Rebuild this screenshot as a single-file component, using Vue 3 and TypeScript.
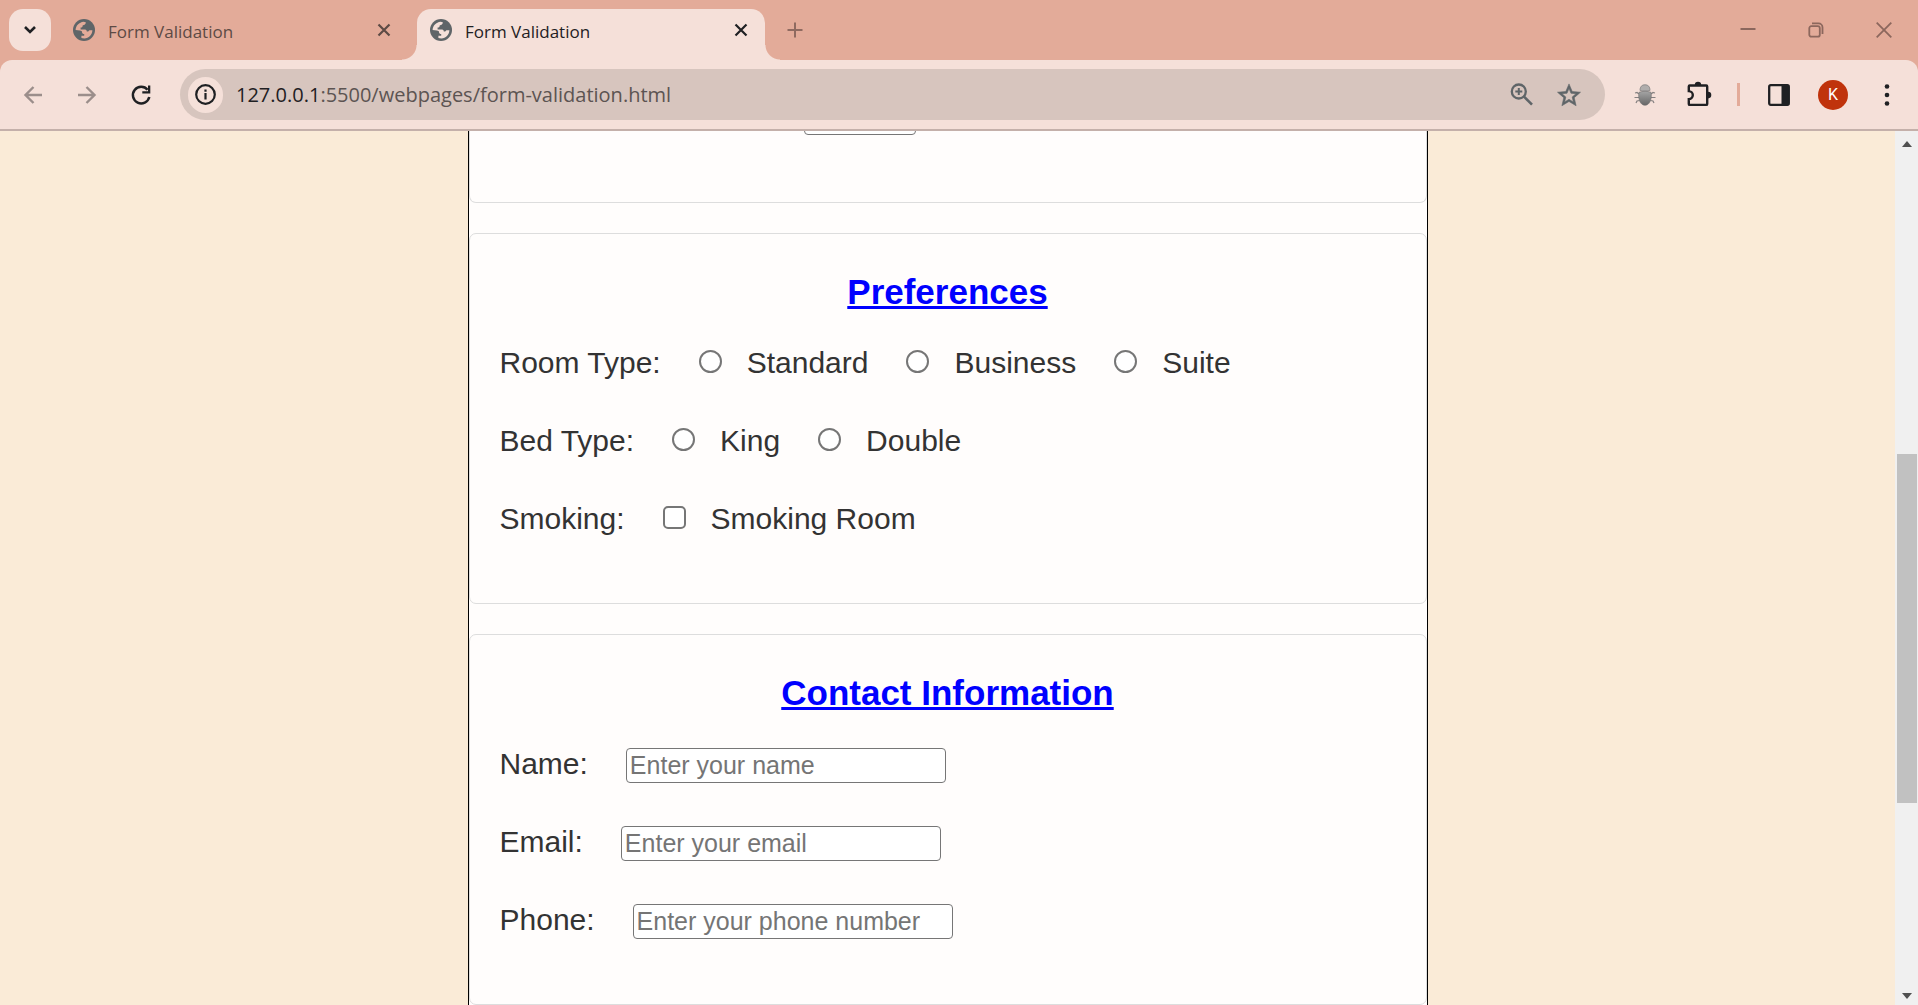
<script setup lang="ts">
import { ref } from 'vue'

interface Tab {
  id: number
  title: string
}

interface Choice {
  id: string
  label: string
}

interface ChoiceRow {
  name: string
  label: string
  type: 'radio' | 'checkbox'
  choices: Choice[]
}

interface TextRow {
  id: string
  label: string
  type: string
  placeholder: string
}

const tabs: Tab[] = [
  { id: 1, title: 'Form Validation' },
  { id: 2, title: 'Form Validation' },
]
const activeTab = ref<number>(2)

const preferenceRows: ChoiceRow[] = [
  {
    name: 'room-type',
    label: 'Room Type:',
    type: 'radio',
    choices: [
      { id: 'standard', label: 'Standard' },
      { id: 'business', label: 'Business' },
      { id: 'suite', label: 'Suite' },
    ],
  },
  {
    name: 'bed-type',
    label: 'Bed Type:',
    type: 'radio',
    choices: [
      { id: 'king', label: 'King' },
      { id: 'double', label: 'Double' },
    ],
  },
  {
    name: 'smoking',
    label: 'Smoking:',
    type: 'checkbox',
    choices: [{ id: 'smoking-room', label: 'Smoking Room' }],
  },
]

const contactRows: TextRow[] = [
  { id: 'name', label: 'Name:', type: 'text', placeholder: 'Enter your name' },
  { id: 'email', label: 'Email:', type: 'email', placeholder: 'Enter your email' },
  { id: 'phone', label: 'Phone:', type: 'tel', placeholder: 'Enter your phone number' },
]
</script>

<template>
  <div class="browser">
    <header class="tab-bar">
      <button class="tab-search" aria-label="Search tabs">
        <svg width="14" height="10" viewBox="0 0 14 10"><path d="M2 2l5 5 5-5" fill="none" stroke="#1f2023" stroke-width="2.6" /></svg>
      </button>
      <div v-for="tab in tabs" :key="tab.id" class="tab" :class="{ active: tab.id === activeTab }" @click="activeTab = tab.id">
        <svg class="globe" width="22" height="22" viewBox="0 0 22 22">
          <circle cx="11" cy="11" r="11" fill="#5f6568" />
          <path
            class="globe-land"
            d="M2.600 11C2.800 6.600 6 3.200 10.600 2.700L12.800 3.300C12.800 5.200 11.800 6 9.800 6.200C9.600 7.800 9.200 8.400 7.600 8.600V10.400H12C13.400 10.400 13.800 11.400 13.800 12.600H15.200L16.400 11.200H19.400C19.200 15.800 15.800 19.200 11.400 19.400C10.200 19.400 9.200 19.200 8.400 18.900V16.800H11.200V15C10 15 9 14.400 9 13C9 12 8 11.800 7 11.600Z"
          />
        </svg>
        <span class="tab-title">{{ tab.title }}</span>
        <button class="tab-close" aria-label="Close tab">
          <svg width="14" height="14" viewBox="0 0 14 14"><path d="M1.500 1.500l11 11M12.500 1.500l-11 11" stroke="currentColor" stroke-width="2.200" /></svg>
        </button>
      </div>
      <button class="new-tab" aria-label="New tab">
        <svg width="16" height="16" viewBox="0 0 16 16"><path d="M8 0.500v15M0.500 8h15" stroke="#8f6a60" stroke-width="2" /></svg>
      </button>
      <div class="window-controls">
        <button aria-label="Minimize">
          <svg width="16" height="16" viewBox="0 0 16 16"><path d="M0.500 7h15" stroke="#8c675d" stroke-width="2" /></svg>
        </button>
        <button aria-label="Restore">
          <svg width="16" height="16" viewBox="0 0 16 16" fill="none" stroke="#8c675d" stroke-width="1.800">
            <rect x="1.300" y="4.200" width="10.500" height="10.500" rx="2" />
            <path d="M4 1.400h6.500a4 4 0 0 1 4 4V12" />
          </svg>
        </button>
        <button aria-label="Close window">
          <svg width="16" height="16" viewBox="0 0 16 16"><path d="M0.700 0.700l14.600 14.600M15.300 0.700L0.700 15.300" stroke="#8c675d" stroke-width="1.800" /></svg>
        </button>
      </div>
    </header>

    <nav class="toolbar" aria-label="Navigation">
      <button class="tool" aria-label="Back">
        <svg width="20" height="20" viewBox="0 0 20 20"><path d="M19 10H3M10.500 2L2.500 10l8 8" fill="none" stroke="#9b8e8b" stroke-width="2.400" /></svg>
      </button>
      <button class="tool" aria-label="Forward">
        <svg width="20" height="20" viewBox="0 0 20 20"><path d="M1 10h16M9.500 2l8 8-8 8" fill="none" stroke="#9b8e8b" stroke-width="2.400" /></svg>
      </button>
      <button class="tool" aria-label="Reload">
        <svg width="22" height="22" viewBox="0 0 22 22">
          <path d="M17.600 5.800A8.300 8.300 0 1 0 19.300 13" fill="none" stroke="#1f2023" stroke-width="2.500" />
          <path d="M20.300 1.500v8h-8v-2.300h5.700V1.500z" fill="#1f2023" />
        </svg>
      </button>
      <div class="omnibox">
        <button class="site-info" aria-label="View site information">
          <svg width="21" height="21" viewBox="0 0 21 21">
            <circle cx="10.500" cy="10.500" r="9.300" fill="none" stroke="#1f2023" stroke-width="2.200" />
            <path d="M10.500 9v6.500M10.500 5.500v2.200" stroke="#1f2023" stroke-width="2.200" />
          </svg>
        </button>
        <div class="url" role="textbox" aria-label="Address" contenteditable="true" spellcheck="false"><span class="host">127.0.0.1</span>:5500/webpages/form-validation.html</div>
        <button class="omni-action" aria-label="Zoom">
          <svg width="23" height="23" viewBox="0 0 23 23" fill="none" stroke="#5f6568">
            <circle cx="8.800" cy="8.500" r="7" stroke-width="2.300" />
            <path d="M14 13.700l8 8" stroke-width="2.600" />
            <path d="M8.800 5v7M5.300 8.500h7" stroke-width="2" />
          </svg>
        </button>
        <button class="omni-action" aria-label="Bookmark this tab">
          <svg width="24" height="24" viewBox="0 0 24 24">
            <path
              d="M22 9.240l-7.190-.620L12 2 9.190 8.630 2 9.240l5.460 4.730L5.820 21 12 17.270 18.180 21l-1.630-7.030L22 9.240zM12 15.400l-3.760 2.270 1-4.280-3.320-2.880 4.380-.380L12 6.100l1.710 4.040 4.380.380-3.320 2.880 1 4.280L12 15.400z"
              fill="#5f6568"
              stroke="#5f6568"
              stroke-width="0.500"
              transform="translate(-1.800 -1.400) scale(1.150)"
            />
          </svg>
        </button>
      </div>
      <button class="tool extension" aria-label="Bug extension">
        <svg width="22" height="22" viewBox="0 0 22 22">
          <defs>
            <linearGradient id="bug-body" x1="0" y1="0" x2="0" y2="1">
              <stop offset="0" stop-color="#a5a5a5" />
              <stop offset="1" stop-color="#666" />
            </linearGradient>
          </defs>
          <path d="M5 10L3 8.500 1 9M17 10l2-1.500 2 .5M5 13.500H0.500M17 13.500h4.500M5.500 16.500L3 17l-1 2M16.500 16.500L19 17l1 2" fill="none" stroke="#858080" stroke-width="1.200" />
          <path d="M6 6.500C6 2.500 8 0.800 11 0.800s5 1.700 5 5.700C13 7.200 9 7.200 6 6.500z" fill="#b0adac" stroke="#858383" stroke-width="0.800" />
          <path d="M5 8.300c4-1.300 8-1.300 12 0 1.200 6-1 13-6 13s-7.200-7-6-13z" fill="url(#bug-body)" stroke="#6f6f6f" stroke-width="0.600" />
        </svg>
      </button>
      <button class="tool" aria-label="Extensions">
        <svg width="28" height="28" viewBox="0 0 28 28">
          <path d="M4.800 4.500h16.400a1 1 0 0 1 1 1v17.400a1 1 0 0 1-1 1H4.800a1 1 0 0 1-1-1v-4.800a4 4 0 0 0 0-8V5.500a1 1 0 0 1 1-1z" fill="none" stroke="#1f2023" stroke-width="2.400" />
          <path d="M9.800 4a3.200 3.200 0 0 1 6.400 0zM23 10.800a3.300 3.300 0 0 1 0 6.600z" fill="#1f2023" />
        </svg>
      </button>
      <span class="separator"></span>
      <button class="tool" aria-label="Side panel">
        <svg width="22" height="22" viewBox="0 0 22 22">
          <rect x="1.200" y="1.200" width="19.600" height="19.600" rx="1.500" fill="none" stroke="#1f2023" stroke-width="2.300" />
          <path d="M13.500 1h7v20h-7z" fill="#1f2023" />
        </svg>
      </button>
      <button class="tool" aria-label="Profile"><span class="avatar">K</span></button>
      <button class="tool" aria-label="Menu">
        <svg width="6" height="22" viewBox="0 0 6 22" fill="#1f2023">
          <circle cx="3" cy="2.500" r="2.300" />
          <circle cx="3" cy="11" r="2.300" />
          <circle cx="3" cy="19.500" r="2.300" />
        </svg>
      </button>
    </nav>

    <div class="viewport">
      <main class="page">
        <form class="sheet" @submit.prevent>
          <fieldset class="card card-cut">
            <input class="field number-field" type="text" aria-label="Number" />
          </fieldset>

          <fieldset class="card">
            <h2>Preferences</h2>
            <div v-for="row in preferenceRows" :key="row.name" class="row" role="group" :aria-label="row.label">
              <span>{{ row.label }}</span>
              <label v-for="choice in row.choices" :key="choice.id" class="choice" :for="choice.id">
                <input :id="choice.id" :class="row.type" :type="row.type" :name="row.name" :value="choice.id" />
                <span>{{ choice.label }}</span>
              </label>
            </div>
          </fieldset>

          <fieldset class="card">
            <h2>Contact Information</h2>
            <div v-for="row in contactRows" :key="row.id" class="row">
              <label :for="row.id">{{ row.label }}</label>
              <input :id="row.id" class="field" :type="row.type" :name="row.id" :placeholder="row.placeholder" />
            </div>
          </fieldset>
        </form>
      </main>
      <div class="scrollbar" aria-hidden="true">
        <svg width="10" height="6" viewBox="0 0 10 6"><path d="M0 6l5-6 5 6z" fill="#505050" /></svg>
        <div class="track">
          <div class="thumb"></div>
        </div>
        <svg width="10" height="6" viewBox="0 0 10 6"><path d="M0 0l5 6 5-6z" fill="#505050" /></svg>
      </div>
    </div>
  </div>
</template>

<style>
body {
  margin: 0;
}
</style>

<style scoped>
* {
  box-sizing: border-box;
}

button {
  display: flex;
  align-items: center;
  justify-content: center;
  padding: 0;
  border: 0;
  background: none;
  font: inherit;
}

.browser {
  display: flex;
  flex-direction: column;
  height: 100vh;
  overflow: hidden;
  background: #e3ab99;
  font-family: "Open Sans", "Noto Sans", sans-serif;
}

.tab-bar {
  display: flex;
  align-items: flex-start;
  height: 60px;
  padding: 9px 0 0 9px;
  background: #e3ab99;
}

.tab-search {
  width: 42px;
  height: 42px;
  margin-right: 9px;
  border-radius: 14px;
  background: #f5e0d9;
}

.tab {
  position: relative;
  display: flex;
  align-items: center;
  width: 348px;
  height: 51px;
  margin-right: 9px;
  padding: 0 12px 9px 13px;
  border-radius: 14px 14px 0 0;
  color: #5d4a45;
}

.tab.active {
  background: #f5e0d9;
  color: #1f2023;
}

.tab.active::before,
.tab.active::after {
  content: "";
  position: absolute;
  bottom: 0;
  width: 15px;
  height: 15px;
}

.tab.active::before {
  right: 100%;
  background: radial-gradient(circle at 0 0, #e3ab99 14px, #f5e0d9 15px);
}

.tab.active::after {
  left: 100%;
  background: radial-gradient(circle at 100% 0, #e3ab99 14px, #f5e0d9 15px);
}

.globe-land {
  fill: #e3ab99;
}

.active .globe-land {
  fill: #f5e0d9;
}

.tab-title {
  flex: 1;
  padding-top: 4px;
  margin-left: 13px;
  font-size: 17px;
  line-height: 24px;
}

.tab-close {
  width: 24px;
  height: 24px;
  color: inherit;
}

.new-tab {
  width: 42px;
  height: 42px;
}

.window-controls {
  display: flex;
  margin-left: auto;
}

.window-controls button {
  width: 68px;
  height: 41px;
}

.toolbar {
  display: flex;
  align-items: center;
  height: 71px;
  padding: 0 4px 0 6px;
  border-bottom: 2px solid #c4b0aa;
  border-radius: 12px 12px 0 0;
  background: #f5e0d9;
}

.tool {
  width: 54px;
  height: 42px;
}

.omnibox {
  display: flex;
  flex: 1;
  align-items: center;
  height: 51px;
  margin-left: 12px;
  padding: 0 12px 0 8px;
  border-radius: 26px;
  background: #d7c5be;
}

.site-info {
  width: 35px;
  height: 36px;
  border-radius: 18px;
  background: #f5e0d9;
}

.url {
  flex: 1;
  margin-left: 13px;
  color: #5c5452;
  font-size: 20px;
  line-height: 28px;
  white-space: nowrap;
  outline: none;
}

.host {
  color: #1f2023;
}

.omni-action {
  width: 48px;
  height: 42px;
}

.extension {
  margin-left: 13px;
}

.separator {
  width: 3px;
  height: 23px;
  margin: 0 12px 0 11px;
  background: #e3ab99;
}

.avatar {
  width: 30px;
  height: 30px;
  border-radius: 50%;
  background: #c0330c;
  color: #fff;
  font-family: Roboto, sans-serif;
  font-size: 16px;
  line-height: 30px;
}

.viewport {
  display: flex;
  flex: 1;
  min-height: 0;
}

.page {
  flex: 1;
  overflow: hidden;
  background: #faebd7;
  color: #333;
  font-family: "Liberation Sans", Arial, sans-serif;
  font-size: 30px;
  line-height: 35px;
}

.sheet {
  display: flex;
  flex-direction: column;
  gap: 30px;
  max-width: 960px;
  margin: 0 auto;
  border: solid #000;
  border-width: 0 1px;
  background: #fffdfc;
}

.card {
  display: flex;
  flex-direction: column;
  gap: 43px;
  min-width: 0;
  margin: 0;
  padding: 38px 30px 67px;
  border: 1px solid #ddd;
  border-radius: 7px;
}

/* Scrolled section: only the lower edge of its last field shows. */
.card-cut {
  padding-top: 0;
  border-top: 0;
  border-radius: 0 0 7px 7px;
}

h2 {
  margin: 0 0 -10px;
  color: #00f;
  font-size: 35px;
  line-height: 40px;
  text-align: center;
  text-decoration: underline;
}

.row {
  display: flex;
  align-items: baseline;
  gap: 38px;
  height: 35px;
}

.choice {
  display: flex;
  align-items: baseline;
  gap: 25px;
}

.radio,
.checkbox {
  appearance: none;
  width: 23px;
  height: 23px;
  margin: 0 0 1px;
  border: 2px solid #767676;
  background: #fff;
}

.radio {
  border-radius: 50%;
}

.checkbox {
  border-radius: 5px;
}

.field {
  width: 320px;
  height: 35px;
  padding: 2px 3px;
  border: 1px solid #767676;
  border-radius: 4px;
  background: #fff;
  color: #000;
  font-family: inherit;
  font-size: 25px;
}

.field::placeholder {
  color: #757575;
}

.number-field {
  width: 112px;
  margin: -31px 0 0 34%;
}

.scrollbar {
  display: flex;
  flex-direction: column;
  align-items: center;
  width: 23px;
  padding: 10px 0 6px;
  background: #f0f0f0;
}

.track {
  flex: 1;
  width: 20px;
  padding: 307px 0 0;
}

.thumb {
  height: 349px;
  background: #c1c1c1;
}
</style>
